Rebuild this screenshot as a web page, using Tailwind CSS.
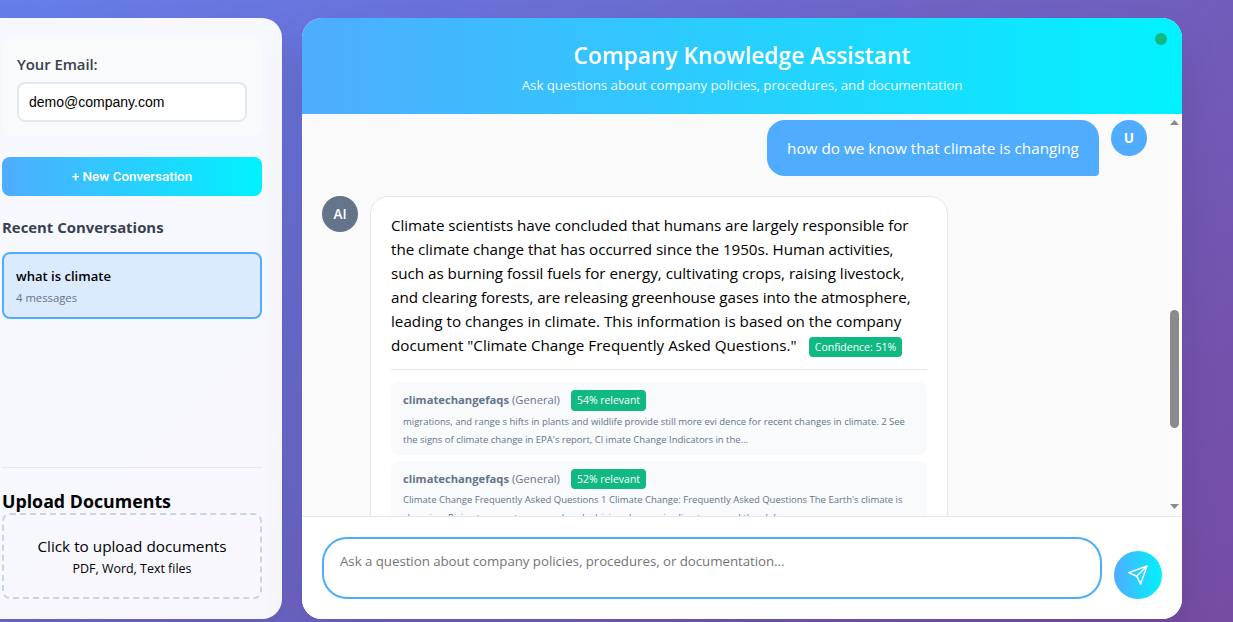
<!DOCTYPE html>
<html lang="en">
<head>
<meta charset="utf-8">
<title>Company Knowledge Assistant</title>
<script src="https://cdn.jsdelivr.net/npm/@tailwindcss/browser@4"></script>
</head>
<body class="h-[622px] overflow-hidden bg-[linear-gradient(135deg,#667eea_0%,#764ba2_100%)] font-['Open_Sans',sans-serif] whitespace-nowrap text-black">
<div class="-ml-[18px] flex h-[619px] w-[1200px] gap-5 pt-[18px]">

  <aside class="flex w-[300px] shrink-0 flex-col rounded-[20px] bg-white/95 p-5 shadow-[0_20px_40px_rgba(0,0,0,0.1)]">
    <section class="h-[99px] rounded-xl bg-[#f8fafc] px-[15px] pt-[15px]">
      <label class="block h-[29px] text-[14.9px] leading-[23px] font-semibold tracking-[-0.05px] text-[#374151]">Your Email:</label>
      <div class="flex h-10 items-center rounded-lg border-2 border-[#e2e8f0] bg-white px-2.5 font-['Liberation_Sans',sans-serif] text-[14px]">demo@company.com</div>
    </section>
    <button class="mt-5 h-[39px] shrink-0 rounded-lg bg-[linear-gradient(90deg,#4facfe,#00f2fe)] font-['Roboto',sans-serif] text-[13.45px] leading-[39px] font-medium text-white">+ New Conversation</button>
    <h3 class="mt-[19px] text-[14.9px] leading-6 font-bold text-[#374151]">Recent Conversations</h3>
    <div class="mt-[13px] h-[67px] rounded-lg border-2 border-[#4facfe] bg-[#dbeafe] px-3 pt-3">
      <div class="text-[13.07px] leading-5 font-semibold">what is climate</div>
      <div class="mt-[3px] text-[11.3px] leading-[18px] text-[#64748b]">4 messages</div>
    </div>
    <section class="mt-auto h-[132px] border-t border-[#e2e8f0] pt-5">
      <h3 class="h-[25px] text-[17.8px] leading-[27px] font-bold">Upload Documents</h3>
      <div class="h-[86px] rounded-lg border-2 border-dashed border-[#cbd5e1] pt-[19px] text-center">
        <div class="text-[15.3px] leading-6">Click to upload documents</div>
        <div class="text-[12.46px] leading-[22px]">PDF, Word, Text files</div>
      </div>
    </section>
  </aside>

  <main class="flex w-[880px] shrink-0 flex-col overflow-hidden rounded-[20px] bg-white shadow-[0_20px_40px_rgba(0,0,0,0.1)]">
    <header class="relative h-24 shrink-0 bg-[linear-gradient(90deg,#4facfe,#00f2fe)] pt-5 text-center text-white">
      <h1 class="text-[22.75px] leading-9 font-semibold">Company Knowledge Assistant</h1>
      <p class="text-[13.4px] leading-[22px] tracking-[-0.08px] opacity-90">Ask questions about company policies, procedures, and documentation</p>
      <span class="absolute top-[15px] right-[15px] size-3 rounded-full bg-[#10b981]"></span>
    </header>

    <div class="flex h-[402px] shrink-0 overflow-hidden bg-[#fafafa]">
      <div class="w-[865px] pt-1.5 pr-5 pl-5">
        <div class="flex justify-end gap-3">
          <div class="h-14 w-[332px] rounded-[18px] rounded-br-[4px] bg-[#4facfe] px-5 py-4 text-[15.3px] leading-6 text-white">how do we know that climate is changing</div>
          <div class="flex size-9 items-center justify-center rounded-full bg-[#4facfe] text-[13.6px] leading-5 font-bold text-white">U</div>
        </div>
        <div class="mt-5 flex gap-3">
          <div class="flex size-9 items-center justify-center rounded-full bg-[#64748b] text-[13.6px] leading-5 font-semibold text-white">AI</div>
          <div class="w-[578px] rounded-[18px] border border-[#e2e8f0] bg-white px-5 pt-4">
            <div class="text-[15.2px] leading-6">
              <div class="tracking-[-0.043px]">Climate scientists have concluded that humans are largely responsible for</div>
              <div class="tracking-[-0.036px]">the climate change that has occurred since the 1950s. Human activities,</div>
              <div class="tracking-[-0.013px]">such as burning fossil fuels for energy, cultivating crops, raising livestock,</div>
              <div class="tracking-[-0.054px]">and clearing forests, are releasing greenhouse gases into the atmosphere,</div>
              <div class="tracking-[0.01px]">leading to changes in climate. This information is based on the company</div>
              <div class="flex h-6"><span class="w-[418px]">document "Climate Change Frequently Asked Questions."</span><span class="mt-1 h-5 w-[93px] rounded bg-[#10b981] text-center text-[10.5px] leading-5 text-white">Confidence: 51%</span></div>
            </div>
            <div class="mt-3 w-[536px] border-t border-[#e2e8f0] pt-3 text-[#64748b]">
              <div class="h-[73px] rounded-lg bg-[#f8fafc] px-3 pt-2">
                <div class="flex h-[23px] text-[11.23px] leading-5"><b class="w-[109px]">climatechangefaqs</b><span class="w-[59px]">(General)</span><span class="h-[21px] w-[75px] rounded bg-[#10b981] text-center text-[10.45px] leading-[21px] text-white">54% relevant</span></div>
                <div class="text-[9.5px] leading-[18px] tracking-[-0.007px]">migrations, and range s hifts in plants and wildlife provide still more evi dence for recent changes in climate. 2 See<br>the signs of climate change in EPA's report, Cl imate Change Indicators in the...</div>
              </div>
              <div class="mt-1.5 h-[73px] rounded-lg bg-[#f8fafc] px-3 pt-2">
                <div class="flex h-[22px] text-[11.23px] leading-5"><b class="w-[109px]">climatechangefaqs</b><span class="w-[59px]">(General)</span><span class="h-5 w-[75px] rounded bg-[#10b981] text-center text-[10.45px] leading-5 text-white">52% relevant</span></div>
                <div class="text-[9.5px] leading-[18px] tracking-[-0.007px]">Climate Change Frequently Asked Questions 1 Climate Change: Frequently Asked Questions The Earth's climate is<br>changing. Rising temperatures are already driving changes in climate around the globe...</div>
              </div>
            </div>
          </div>
        </div>
      </div>
      <div class="flex w-[15px] flex-col items-center bg-[#fcfcfc] pt-1.5 pb-[7px]">
        <svg width="9" height="5" viewBox="0 0 9 5" fill="#8b8b8b"><path d="M4.500 0 9 5H0z"/></svg>
        <div class="mt-[185px] h-[118px] w-[9px] rounded-full bg-[#8b8b8b]"></div>
        <svg class="mt-auto" width="9" height="5" viewBox="0 0 9 5" fill="#8b8b8b"><path d="M0 0h9L4.500 5z"/></svg>
      </div>
    </div>

    <footer class="flex flex-1 items-end gap-3 border-t border-[#e2e8f0] bg-white px-5 pb-5">
      <div class="h-[62px] w-[780px] rounded-[25px] border-2 border-[#4facfe] px-4 pt-3 text-[13.3px] leading-[21px] tracking-[-0.045px] text-[#757575]">Ask a question about company policies, procedures, or documentation...</div>
      <button class="flex size-12 items-center justify-center rounded-full bg-[linear-gradient(90deg,#4facfe,#00f2fe)]">
        <svg width="20" height="20" viewBox="0 0 20 20" fill="none" stroke="white" stroke-width="1.500" stroke-linejoin="round"><path d="M19 1 .8 7.600 8.800 11.200 12.600 19z M19 1 8.800 11.200"/></svg>
      </button>
    </footer>
  </main>
</div>
</body>
</html>
